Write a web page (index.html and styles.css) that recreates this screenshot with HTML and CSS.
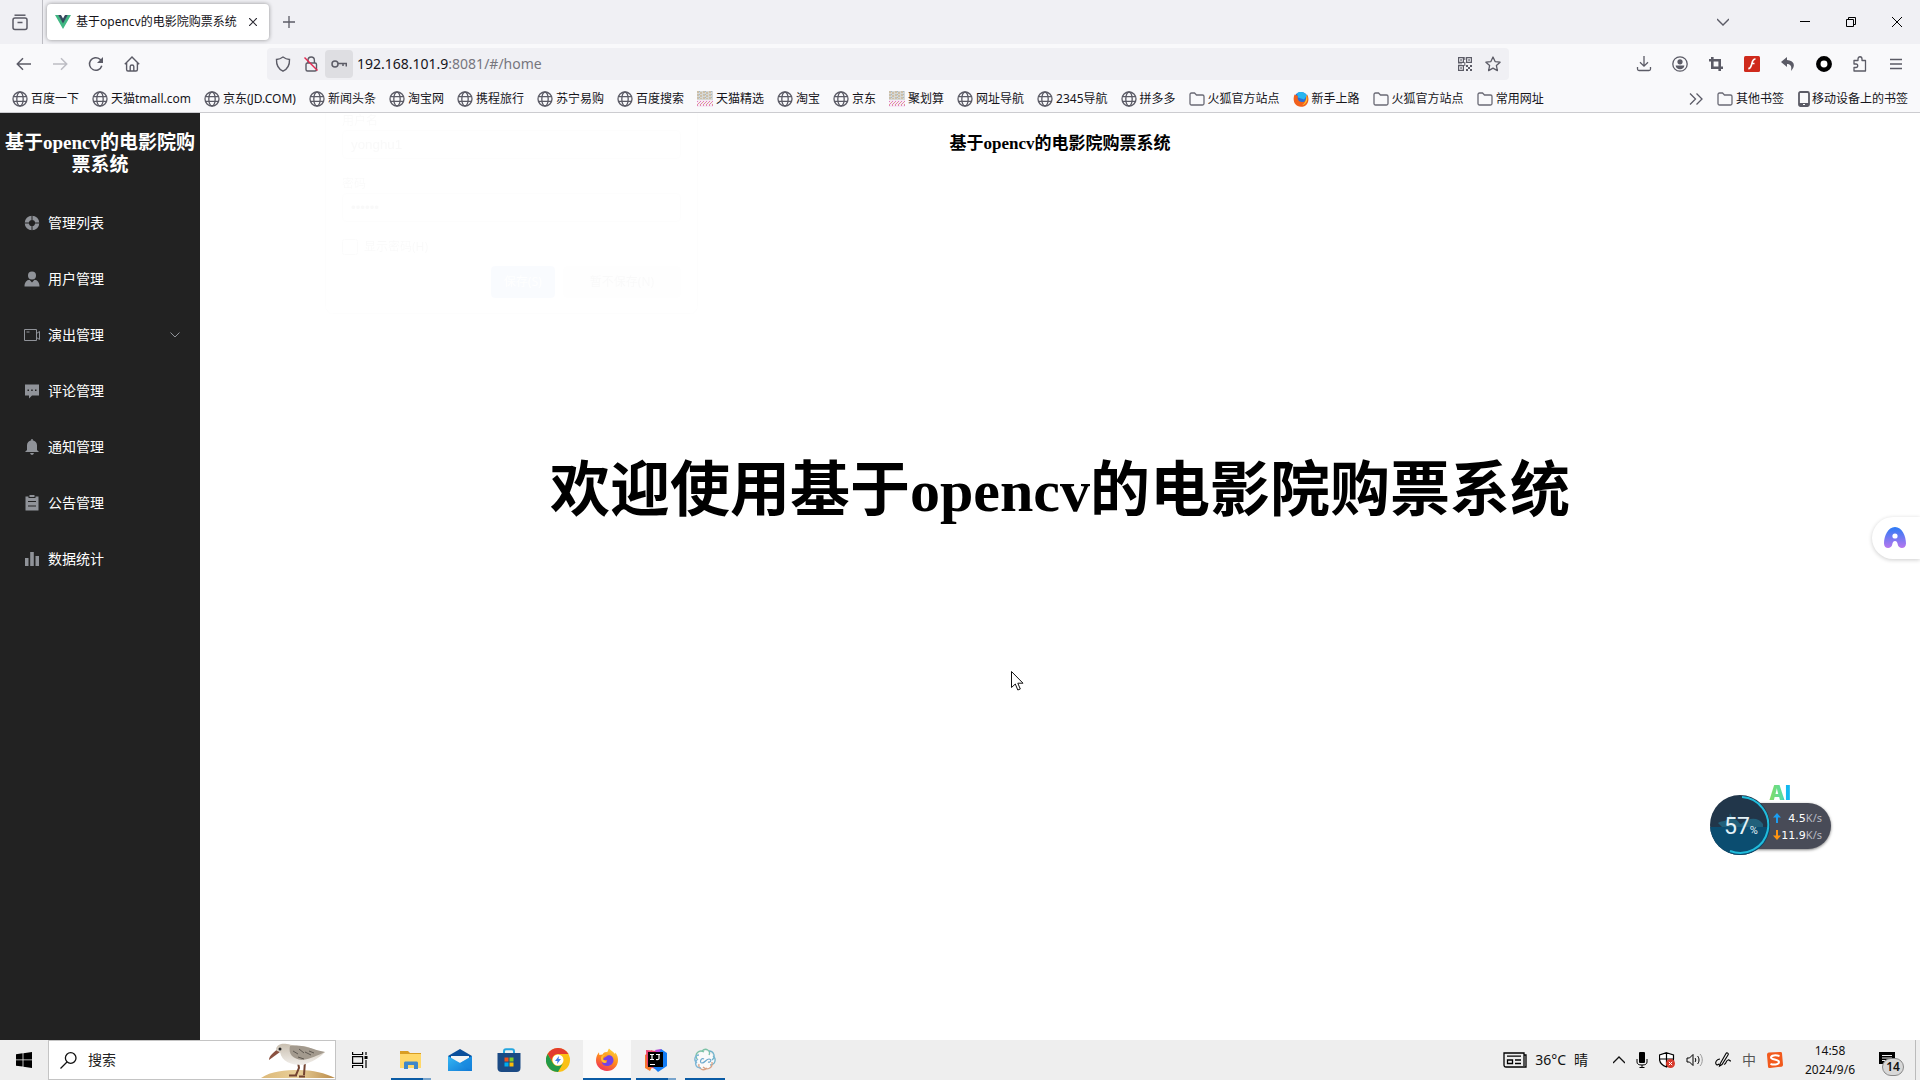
FILE: index.html
```html
<!DOCTYPE html>
<html lang="zh-CN">
<head>
<meta charset="utf-8">
<title>基于opencv的电影院购票系统</title>
<link rel="stylesheet" href="styles.css">
</head>
<body>
<svg class="defs" width="0" height="0" aria-hidden="true">
  <defs>
    <linearGradient id="flame" x1="0.8" y1="0" x2="0.3" y2="1"><stop offset="0" stop-color="#ffd83a"/><stop offset="0.5" stop-color="#ff8a1c"/><stop offset="1" stop-color="#f0305a"/></linearGradient>
    <linearGradient id="assist" x1="0" y1="0" x2="0" y2="1"><stop offset="0" stop-color="#2a7bf6"/><stop offset="1" stop-color="#b877ee"/></linearGradient>
    <linearGradient id="mailflap" x1="0" y1="0" x2="1" y2="1"><stop offset="0" stop-color="#35b8f5"/><stop offset="1" stop-color="#0f77d4"/></linearGradient>
    <linearGradient id="sand" x1="0" y1="0" x2="1" y2="0"><stop offset="0" stop-color="#dcb878"/><stop offset="0.5" stop-color="#e9d09a"/><stop offset="1" stop-color="#b98a48"/></linearGradient>
    <linearGradient id="belly" x1="0" y1="0" x2="0" y2="1"><stop offset="0" stop-color="#c9bfb0"/><stop offset="1" stop-color="#f1eeea"/></linearGradient>
    <symbol id="globe" viewBox="0 0 16 16"><g fill="none" stroke="#5b5b66" stroke-width="1.3"><circle cx="8" cy="8" r="7"/><ellipse cx="8" cy="8" rx="3.2" ry="7"/><path d="M1.5 5.6h13M1.5 10.4h13"/></g></symbol>
    <symbol id="folder" viewBox="0 0 16 16"><path d="M1 12.5v-9C1 2.6 1.600 2 2.500 2h3l2 2h6c.9 0 1.500.600 1.500 1.500v7c0 .9-.6 1.500-1.500 1.500h-11C1.600 14 1 13.400 1 12.500z" fill="none" stroke="#6a6a75" stroke-width="1.3"/></symbol>
    <symbol id="shop" viewBox="0 0 16 16"><path fill="#d6d8d6" d="M0 0h16v16H0z"/><path d="M1 0v8M4 1v7M7 0v8M10 1v7M13 0v8" stroke="#c3a67a" stroke-dasharray="2 1"/><path d="M2.500 0v8M8.500 0v8M14.500 0v8" stroke="#a3b8c9" stroke-dasharray="1 2"/><path fill="#f7e9f3" d="M0 9h16v7H0z"/><path d="M0 10.500h16M1 12.500h15M0 14.500h16" stroke="#e07cc2" stroke-dasharray="1 2"/><path d="M2 11.500h14M0 13.500h16" stroke="#dda58a" stroke-dasharray="1 2"/></symbol>
    <symbol id="firefox" viewBox="0 0 24 24"><path fill="url(#flame)" d="M12 23C5.800 23 1 18.300 1 12.300 1 8.800 2.300 6.300 4 4.200L4.300 7 7.600 6.500C8.700 4.500 10.500 3.800 12 4.200 13 3.200 13 1.800 14 .5c2 2.300 4.500 3.500 6 5.500l.4-1.500c2 2.600 2.700 5 2.600 7.500C23 18.200 18.200 23 12 23z"/><path fill="#7542e5" d="M12.500 7.500c3.500-1 6 1.500 6 4.700 0 3.400-2.900 5.800-6.300 5.800-3 0-5-1.500-5.400-4 2 1.300 3.700.6 4.700-.2 1.300-1 .8-1.600-.2-1.800-1.200-.2-2.600.4-3.300-.4 1-2.500 3-2.600 4.500-4.100z"/><path fill="#ffbd30" d="M8 11.600c-.5-1.800.6-3.700 2.600-4.600-1.300-.6-3 0-4.200 1.600-1 2-.4 4.700 1.600 6 1.700.6 3 .2 4-.6z"/></symbol>
    <symbol id="firefox-nightly" viewBox="0 0 16 16"><circle cx="8" cy="8" r="7" fill="#2b6fd8"/><path fill="#27b6f0" d="M4 2.500c3-2.500 8-1.500 10 2l-3 4-6-2z"/><path fill="#f2611c" d="M1.500 3.500L5 5c-1 2 0 5.500 3.500 6C12 11.500 13 9 13 6.500c.6-1 1-2 1-3 3 4 1.500 12.300-6 12.300C1.500 15.800-.8 9 1.500 3.500z"/><path fill="#ffc52e" d="M13.500 4c2 4 .5 9-4.500 10.300 4-3 4.500-6.300 4.500-10.300z"/></symbol>
  </defs>
</svg>

<header class="browser">
  <div class="tabbar">
    <button class="icon-btn recent" aria-label="最近浏览"><svg width="16" height="18" viewBox="0 0 16 18" fill="none" stroke="#5b5b66" stroke-width="1.500"><path d="M2.500 2.200h11" /><rect x="1" y="5" width="14" height="11.500" rx="2"/><path d="M5.500 9.500h5"/></svg></button>
    <div class="tab">
      <svg width="16" height="14" viewBox="0 0 16 14"><path fill="#41b883" d="M0 0h3.500L8 7.500 12.500 0H16L8 14z"/><path fill="#34495e" d="M3.200 0H6l2 3.500L10 0h2.800L8 8.400z"/></svg>
      <span class="tab-title">基于opencv的电影院购票系统</span>
      <button class="icon-btn tab-close" aria-label="关闭标签页"><svg width="8" height="8" viewBox="0 0 8 8" stroke="#2b2a33" stroke-width="1.200"><path d="M0 0l8 8M8 0L0 8"/></svg></button>
    </div>
    <button class="icon-btn new-tab" aria-label="新建标签页"><svg width="12" height="12" viewBox="0 0 12 12" stroke="#5b5b66" stroke-width="1.300"><path d="M6 0v12M0 6h12"/></svg></button>
    <div class="window-controls">
      <button class="icon-btn tabs-list" aria-label="标签页列表"><svg width="12" height="8" viewBox="0 0 12 8" fill="none" stroke="#5b5b66" stroke-width="1.400"><path d="M0 1l6 6 6-6"/></svg></button>
      <button class="icon-btn" aria-label="最小化"><svg width="10" height="10" viewBox="0 0 10 10" stroke="#000"><path d="M0 4.500h10"/></svg></button>
      <button class="icon-btn" aria-label="还原"><svg width="10" height="10" viewBox="0 0 10 10" fill="none" stroke="#000"><path d="M.5 2.500h7v7h-7zM2.500 2.500v-2h7v7h-2"/></svg></button>
      <button class="icon-btn" aria-label="关闭"><svg width="10" height="10" viewBox="0 0 10 10" stroke="#000"><path d="M0 0l10 10M10 0L0 10"/></svg></button>
    </div>
  </div>

  <div class="navbar">
    <div class="nav-buttons">
      <button class="icon-btn" aria-label="后退"><svg width="16" height="16" viewBox="0 0 16 16" fill="none" stroke="#5b5b66" stroke-width="1.500"><path d="M15 8H1.500M7 2.200L1.300 8 7 13.800"/></svg></button>
      <button class="icon-btn" aria-label="前进"><svg width="16" height="16" viewBox="0 0 16 16" fill="none" stroke="#bdbdc4" stroke-width="1.500"><path d="M1 8h13.500M9 2.200L14.700 8 9 13.800"/></svg></button>
      <button class="icon-btn" aria-label="刷新"><svg width="16" height="16" viewBox="0 0 16 16" fill="none" stroke="#5b5b66" stroke-width="1.500"><path d="M13.800 9.800A6.300 6.300 0 1 1 12 3.300L14 5.500"/><path fill="#5b5b66" stroke="none" d="M15 1v6H9z"/></svg></button>
      <button class="icon-btn" aria-label="主页"><svg width="16" height="16" viewBox="0 0 16 16" fill="none" stroke="#5b5b66" stroke-width="1.400"><path d="M.8 8.200L8 1l7.200 7.200M2.600 7v6.500c0 .8.500 1.500 1.400 1.500h8c.9 0 1.400-.7 1.400-1.500V7M6.200 15v-4.500c0-1 .8-1.500 1.800-1.500s1.800.5 1.800 1.500V15"/></svg></button>
    </div>
    <div class="urlbar">
      <button class="icon-btn url-icon" aria-label="跟踪保护"><svg width="16" height="16" viewBox="0 0 16 16" fill="none" stroke="#5b5b66" stroke-width="1.400"><path d="M8 1c2 1.500 4 2.300 6.500 2.500.2 5-1.500 9.300-6.500 11.700C3 12.800 1.300 8.500 1.500 3.500 4 3.300 6 2.500 8 1z"/></svg></button>
      <button class="icon-btn url-icon" aria-label="连接不安全"><svg width="16" height="16" viewBox="0 0 16 16" fill="none"><g stroke="#5b5b66" stroke-width="1.400"><rect x="3" y="7" width="10.500" height="8" rx="1.500"/><path d="M5 7V4.500C5 2.500 6.300 1 8.200 1s3.200 1.500 3.200 3.500V7"/></g><path d="M1.500 1.500l13 13" stroke="#e22850" stroke-width="1.400"/></svg></button>
      <button class="icon-btn url-icon key" aria-label="已保存的密码"><svg width="16" height="16" viewBox="0 0 16 16" fill="none" stroke="#5b5b66" stroke-width="1.500"><circle cx="4" cy="8" r="3"/><path d="M7 7.500h8.300v3M12 7.500v2.500"/></svg></button>
      <a class="url" href="#/home">192.168.101.9<span>:8081/#/home</span></a>
      <button class="icon-btn url-icon" aria-label="二维码"><svg width="16" height="16" viewBox="0 0 16 16"><g fill="none" stroke="#5b5b66" stroke-width="1.200"><path d="M1.600 1.600h4.800v4.800H1.600zM9.600 1.600h4.800v4.800H9.600zM1.600 9.600h4.800v4.800H1.600z"/></g><path fill="#5b5b66" d="M3.300 3.300h1.500v1.500H3.300zM11.300 3.300h1.500v1.500h-1.500zM3.300 11.300h1.500v1.500H3.300zM9 9h2v2H9zM13 9h2v2h-2zM11 11h2v2h-2zM9 13h2v2H9zM13 13h2v2h-2zM7.300 1h1v3h-1zM7.300 6h1v4h-1zM1 7.400h4v.9H1z"/></svg></button>
      <button class="icon-btn url-icon" aria-label="添加书签"><svg width="16" height="16" viewBox="0 0 16 16" fill="none" stroke="#5b5b66" stroke-width="1.300" stroke-linejoin="round"><path d="M8 1l2.100 4.600 5 .6-3.700 3.400 1 5L8 12.100l-4.400 2.500 1-5L.9 6.200l5-.6z"/></svg></button>
    </div>
    <div class="tools">
      <button class="icon-btn" aria-label="下载"><svg width="16" height="16" viewBox="0 0 16 16" fill="none" stroke="#5b5b66" stroke-width="1.300"><path d="M8 0v10M4 6.200l4 4 4-4M1.500 11v2c0 .9.600 1.500 1.500 1.500h10c.9 0 1.500-.6 1.500-1.500v-2"/></svg></button>
      <button class="icon-btn" aria-label="账户"><svg width="16" height="16" viewBox="0 0 16 16"><circle cx="8" cy="8" r="7.200" fill="none" stroke="#5b5b66" stroke-width="1.300"/><circle cx="8" cy="5.800" r="2.600" fill="#5b5b66"/><path d="M3.600 9.500h8.800C12 12 10.300 13.200 8 13.200S4 12 3.600 9.500z" fill="#5b5b66"/></svg></button>
      <button class="icon-btn" aria-label="截图"><svg width="16" height="16" viewBox="0 0 16 16" fill="none" stroke="#5b5b66" stroke-width="2.600"><path d="M1 4.300h10.700V15M4.300 1v10.700H15"/></svg></button>
      <button class="icon-btn" aria-label="Flash"><svg width="16" height="16" viewBox="0 0 16 16"><rect width="16" height="16" rx="1.500" fill="#cf2a1c"/><path d="M11.500 3C8 3 8.300 7 7.300 9.500 6.700 11.300 6 12.500 4.300 12.700M7.500 7.500h3" fill="none" stroke="#fff" stroke-width="1.700"/></svg></button>
      <button class="icon-btn" aria-label="撤销"><svg width="16" height="16" viewBox="0 0 16 16"><path fill="#5b5b66" d="M7 1L1 6l6 5V8c3.500 0 5 2 4 7 5-5 3.500-10.500-4-11z"/></svg></button>
      <button class="icon-btn" aria-label="扩展程序"><svg width="16" height="16" viewBox="0 0 16 16"><circle cx="8" cy="8" r="5.700" fill="#fff" stroke="#000" stroke-width="4.500"/></svg></button>
      <button class="icon-btn" aria-label="扩展"><svg width="16" height="16" viewBox="0 0 16 16" fill="none" stroke="#5b5b66" stroke-width="1.300" stroke-linejoin="round"><path d="M6 4.500V3c0-3 4-3 4 0v1.500h3.500V15H2v-3.500h2c2.300 0 2.300-3.500 0-3.500H2V4.500z"/></svg></button>
      <button class="icon-btn" aria-label="菜单"><svg width="14" height="12" viewBox="0 0 14 12" stroke="#5b5b66" stroke-width="1.300"><path d="M1 1.500h12M1 6h12M1 10.500h12"/></svg></button>
    </div>
  </div>

  <nav class="bookmarks" aria-label="书签">
    <a href="#"><svg class="ico"><use href="#globe"/></svg>百度一下</a>
    <a href="#"><svg class="ico"><use href="#globe"/></svg>天猫tmall.com</a>
    <a href="#"><svg class="ico"><use href="#globe"/></svg>京东(JD.COM)</a>
    <a href="#"><svg class="ico"><use href="#globe"/></svg>新闻头条</a>
    <a href="#"><svg class="ico"><use href="#globe"/></svg>淘宝网</a>
    <a href="#"><svg class="ico"><use href="#globe"/></svg>携程旅行</a>
    <a href="#"><svg class="ico"><use href="#globe"/></svg>苏宁易购</a>
    <a href="#"><svg class="ico"><use href="#globe"/></svg>百度搜索</a>
    <a href="#"><svg class="ico"><use href="#shop"/></svg>天猫精选</a>
    <a href="#"><svg class="ico"><use href="#globe"/></svg>淘宝</a>
    <a href="#"><svg class="ico"><use href="#globe"/></svg>京东</a>
    <a href="#"><svg class="ico"><use href="#shop"/></svg>聚划算</a>
    <a href="#"><svg class="ico"><use href="#globe"/></svg>网址导航</a>
    <a href="#"><svg class="ico"><use href="#globe"/></svg>2345导航</a>
    <a href="#"><svg class="ico"><use href="#globe"/></svg>拼多多</a>
    <a href="#"><svg class="ico"><use href="#folder"/></svg>火狐官方站点</a>
    <a href="#"><svg class="ico"><use href="#firefox-nightly"/></svg>新手上路</a>
    <a href="#"><svg class="ico"><use href="#folder"/></svg>火狐官方站点</a>
    <a href="#"><svg class="ico"><use href="#folder"/></svg>常用网址</a>
    <div class="bookmarks-end">
      <button class="icon-btn" aria-label="更多书签"><svg width="14" height="12" viewBox="0 0 14 12" fill="none" stroke="#5b5b66" stroke-width="1.300"><path d="M1 .5L6.500 6 1 11.500M7.500.5L13 6l-5.500 5.500"/></svg></button>
      <a href="#"><svg class="ico"><use href="#folder"/></svg>其他书签</a>
      <a class="mobile" href="#"><svg width="12" height="16" viewBox="0 0 12 16"><rect x="1" y="1" width="10" height="14" rx="1.500" fill="none" stroke="#5b5b66" stroke-width="1.800"/><path d="M1 12h10v3H1z" fill="#5b5b66"/><path d="M5 13.500h2" stroke="#fff"/></svg>移动设备上的书签</a>
    </div>
  </nav>
</header>

<div class="page">
  <aside class="sidebar">
    <h3>基于opencv的电影院购票系统</h3>
    <ul class="menu">
      <li><a href="#"><svg width="24" height="16" viewBox="0 0 24 16"><circle cx="12" cy="8" r="5.200" fill="none" stroke="#909399" stroke-width="4.200"/><path d="M12 0v5M12 11v5M4 8h5M15 8h5" stroke="#222"/></svg>管理列表</a></li>
      <li><a href="#"><svg width="24" height="16" viewBox="0 0 24 16" fill="#909399"><circle cx="12" cy="4.500" r="4"/><path d="M4.500 15.500c0-4 2-6.500 5-6.700l2.500 2.700 2.500-2.700c3 .2 5 2.700 5 6.700z"/></svg>用户管理</a></li>
      <li><a href="#"><svg width="24" height="16" viewBox="0 0 24 16" fill="none" stroke="#909399"><path d="M4.500 2.500h12v11h-12zM16.500 6.500l3-2v8l-3-2M6.500 5h3"/></svg>演出管理<svg class="arrow" width="10" height="8" viewBox="0 0 10 8" fill="none" stroke="#909399"><path d="M.5 1.500L5 6l4.500-4.500"/></svg></a></li>
      <li><a href="#"><svg width="24" height="16" viewBox="0 0 24 16"><path fill="#909399" d="M5 1.500h14v11h-7L9 15.500v-3H5z"/><path fill="#222" d="M7.500 6.500H9V8H7.500zM11.200 6.500h1.500V8h-1.500zM15 6.500h1.500V8H15z"/></svg>评论管理</a></li>
      <li><a href="#"><svg width="24" height="16" viewBox="0 0 24 16" fill="#909399"><path d="M11.300 0h1.400v1.200c2.600.5 4.300 2.400 4.300 5V11l2 2H5l2-2V6.200c0-2.600 1.700-4.500 4.300-5zM10 14h4l-1 1.700h-2z"/></svg>通知管理</a></li>
      <li><a href="#"><svg width="24" height="16" viewBox="0 0 24 16"><path fill="#909399" d="M5.500 1.500h3V3h7V1.500h3v14h-13zM9.500 0h5v2h-5z"/><path d="M8 6.500h8M8 11h8" stroke="#222" stroke-width="1.200"/></svg>公告管理</a></li>
      <li><a href="#"><svg width="24" height="16" viewBox="0 0 24 16" fill="#909399"><path d="M5 7h3.500v8H5zM10.200 1h3.600v14h-3.600zM15.500 5H19v10h-3.500z"/></svg>数据统计</a></li>
    </ul>
  </aside>
  <main class="content">
    <h4>基于opencv的电影院购票系统</h4>
    <div class="welcome"><h1>欢迎使用基于opencv的电影院购票系统</h1></div>
  </main>

  <div class="fading-prompt" aria-hidden="true">
    <label for="user">用户名</label>
    <input id="user" type="text" value="yonghu1" tabindex="-1">
    <label for="pass">密码</label>
    <input id="pass" type="password" value="123456" tabindex="-1">
    <div class="show"><input id="show" type="checkbox" tabindex="-1"><label for="show">显示密码(H)</label></div>
    <div class="prompt-actions"><button class="primary" tabindex="-1">保存(S)</button><button tabindex="-1">暂不保存(N)</button></div>
  </div>

  <button class="assistant" aria-label="助手"><svg width="22" height="22" viewBox="0 0 22 22"><path fill="url(#assist)" d="M11 0c7 0 11 9 11 16.500 0 6-7.500 6-8.300.8-.3-2-1-3.300-2.700-3.300s-2.400 1.300-2.700 3.300C7.500 22.500 0 22.500 0 16.500 0 9 4 0 11 0z"/><circle cx="11" cy="9" r="2.600" fill="#fff"/></svg></button>

  <div class="monitor">
    <span class="ai">AI</span>
    <div class="speeds">
      <div><svg width="8" height="10" viewBox="0 0 8 10"><path d="M4 0l4 4.500H5V10H3V4.500H0z" fill="#1c9df0"/></svg><span>4.5<i>K/s</i></span></div>
      <div><svg width="8" height="10" viewBox="0 0 8 10"><path d="M4 10l4-4.500H5V0H3v5.500H0z" fill="#ff9412"/></svg><span>11.9<i>K/s</i></span></div>
    </div>
    <div class="gauge">
      <svg width="60" height="60" viewBox="0 0 60 60"><path fill="#21364a" d="M0 0h60v60H0z"/><path d="M0 32h60v28H0z" fill="#0b4d70"/><path d="M8 28c5-3 8-1 11-5l1-5 3 6c5 0 6 5 8 5 6-6 17-8 22 0v3H12z" fill="#21607a"/><path d="M32 2a28 28 0 1 1-12 54" fill="none" stroke="#20bcdc" stroke-width="2"/></svg>
      <span class="gauge-value">57<small>%</small></span>
    </div>
  </div>

  <svg class="cursor" width="13" height="20" viewBox="0 0 13 20"><path d="M.5.500v16L4.300 13l2.500 6 2.500-1-2.500-5.800H12z" fill="#fff" stroke="#111"/></svg>
</div>

<footer class="taskbar">
  <button class="task start" aria-label="开始"><svg width="16" height="16" viewBox="0 0 16 16"><path d="M0 2.300L6.600 1.300v6.200H0zM7.400 1.200L16 0v7.500H7.400zM0 8.300h6.600v6.300L0 13.700zM7.400 8.300H16V16l-8.600-1.200z"/></svg></button>
  <div class="search">
    <svg width="17" height="17" viewBox="0 0 17 17" fill="none" stroke="#111" stroke-width="1.300"><circle cx="10.700" cy="6" r="5.300"/><path d="M7 10L.5 16.500"/></svg>
    <input type="text" value="搜索" aria-label="搜索">
    <svg width="74" height="36" viewBox="0 0 74 36"><path d="M0 36c10-7 24-8 38-8s26 3 36 8z" fill="url(#sand)"/><path d="M37 20l1 6-3 7M44 19l-1 14M28 33.500h8M38 34.500h6" stroke="#744431" stroke-width="2" fill="none"/><path d="M17 7C10 12 8 15 8 18l11-8z" fill="#8a5140"/><path d="M15 7c1-5 6-6 11-5 5 1 8 2 14 2 9 0 12 5 24 6-6 6-13 10-22 13-12 0-21-3-23-13-2-1-4-1-4-3z" fill="url(#belly)"/><path d="M29 4c14-2 20 3 35 6-7 3-14 7-23 8C32 17 27 12 29 4z" fill="#a39a8e"/><path d="M32 9l5 3M38 7l5 4M44 10l6 3M37 15l6 2M48 9l5 2" stroke="#5e5851"/><circle cx="19" cy="7" r="1.500" fill="#222"/></svg>
  </div>
  <button class="task" aria-label="任务视图"><svg width="16" height="16" viewBox="0 0 16 16" fill="none" stroke="#000" stroke-width="1.200"><path d="M.6 0v2.500h10V0M.6 16v-2.500h10V16M.6 4.600h10v6.800H.6zM14 0v3M14 8v8"/><path fill="#000" stroke="none" d="M12.500 4h3v3h-3z"/></svg></button>
  <div class="apps">
    <button class="task running multi" aria-label="文件资源管理器"><svg width="24" height="24" viewBox="0 0 24 24"><path fill="#d99e22" d="M1 3h8l2 2h11v4H1z"/><path fill="#ffd869" d="M1 6h21v14H1z"/><path fill="#3f87c9" d="M5 21v-6c0-1 .6-1.600 1.600-1.600h10.800c1 0 1.600.6 1.600 1.600v6h-4v-4H9v4z"/></svg></button>
    <button class="task" aria-label="邮件"><svg width="24" height="24" viewBox="0 0 24 24"><path fill="#0b4f9b" d="M0 8l12-7 12 7v3H0z"/><path fill="#f4f4f4" d="M3 8h18v6H3z"/><path fill="url(#mailflap)" d="M0 8l12 7 12-7v15H0z"/><path fill="#1789df" opacity=".6" d="M9.500 13.500L24 23V8l-12 7z"/></svg></button>
    <button class="task" aria-label="应用商店"><svg width="24" height="24" viewBox="0 0 24 24"><path d="M7 7V3.500C7 2 8 1.200 9 1.200h6c1 0 2 .8 2 2.300V7" fill="none" stroke="#25a6df" stroke-width="2"/><path fill="#1b4a84" d="M.5 5h23v15c0 2.500-1.500 4-4 4h-15c-2.500 0-4-1.500-4-4z"/><path fill="#f1511b" d="M7.500 9.500h4v4h-4z"/><path fill="#80cc28" d="M12.500 9.500h4v4h-4z"/><path fill="#00adef" d="M7.500 14.500h4v4h-4z"/><path fill="#fbbc09" d="M12.500 14.500h4v4h-4z"/></svg></button>
    <button class="task" aria-label="Chrome"><svg width="24" height="24" viewBox="0 0 24 24"><circle cx="12" cy="12" r="12" fill="#fbc116"/><path fill="#e33b2e" d="M1.600 6A12 12 0 0 1 22.400 6H12a6 6 0 0 0-5.200 9z"/><path fill="#229a48" d="M1.600 6A12 12 0 0 0 12 24l5.200-9A6 6 0 0 1 6.800 15z"/><circle cx="12" cy="12" r="5.500" fill="#fff"/><path fill="#3c7de8" d="M13 8l-4 5h2.500L11 16l4-5h-2.500z"/></svg></button>
    <button class="task running active" aria-label="Firefox"><svg width="24" height="24"><use href="#firefox"/></svg></button>
    <button class="task running multi" aria-label="IntelliJ IDEA"><svg width="24" height="24" viewBox="0 0 24 24"><path fill="#f77a2b" d="M1 7l7-5 4 10-6 11-5-3z"/><path fill="#e9406f" d="M2 2l10 1 6 8-4 11-11-4z"/><path fill="#b345d8" d="M11 2l6-1 4 5-5 6z"/><path fill="#147df5" d="M17 1l6 4v13l-9 6-5-5z"/><path d="M4 4h15v15H4z"/><path d="M6 6.500h4M8 6.500v5M6 11.500h4M12 6.500h4M15 6.500v4c0 1-1.500 1.300-3 1M6 16.500h5" stroke="#fff" stroke-width="1.200" fill="none"/></svg></button>
    <button class="task running" aria-label="OpenCV"><svg width="24" height="24" viewBox="0 0 24 24" fill="none" stroke-width="1.300"><circle cx="12" cy="12" r="9" fill="#fafafa" stroke="none"/><path d="M4 11C1 6 6 1 11 4M9 3c4-4 9 0 7 4" stroke="#7cc2a6"/><path d="M16 3c5 0 7 6 3 9M20 8c4 3 2 9-3 9" stroke="#72b4cc"/><path d="M19 14c1 6-5 9-9 5M14 20c-4 4-9 0-8-4" stroke="#d8a083"/><path d="M8 20c-6 0-7-6-3-9M4 15C0 12 2 7 6 7" stroke="#7cb6d6"/><path d="M11 11c-3-2-5 4-2 4 3 0 4-4 7-4 3 0 2 4-1 3" stroke="#6ba7cd" stroke-width="1.200"/></svg></button>
  </div>
  <div class="tray">
    <button class="weather"><svg width="24" height="16" viewBox="0 0 24 16" fill="none" stroke="#000" stroke-width="1.300"><path d="M21 3h2v12H3c-1.300 0-2-.7-2-2V1h20v13M4 4.200h14M12 8h6M12 11.500h6M4.500 8h5v3.500h-5z"/></svg><span>36°C</span><span>晴</span></button>
    <div class="tray-icons">
      <button class="icon-btn" aria-label="显示隐藏的图标"><svg width="12" height="8" viewBox="0 0 12 8" fill="none" stroke="#111" stroke-width="1.300"><path d="M0 7l6-6 6 6"/></svg></button>
      <button class="icon-btn" aria-label="麦克风"><svg width="12" height="16" viewBox="0 0 12 16"><rect x="3" width="6" height="11" rx="1"/><path d="M1 7v3c0 2 1.500 3 5 3s5-1 5-3V7M6 13v3M3.500 15.500h5" fill="none" stroke="#000"/></svg></button>
      <button class="icon-btn" aria-label="安全中心"><svg width="16" height="16" viewBox="0 0 16 16"><path d="M7.500.700L14.500 3v4c0 3.500-3 6.500-7 8-4-1.500-7-4.500-7-8V3zM7.500.700V15M.5 7h14" fill="#fff" stroke="#000" stroke-width="1.200"/><circle cx="11.500" cy="11.500" r="4.500" fill="#d8392c"/><path d="M9.800 9.800l3.400 3.400M13.200 9.800l-3.400 3.400" stroke="#fff"/></svg></button>
      <button class="icon-btn" aria-label="音量"><svg width="18" height="14" viewBox="0 0 18 14" fill="none" stroke="#000"><path d="M1 5h2.500L7 1.500v11L3.500 9H1zM9 5c1 1 1 3 0 4M11.500 3c2 2 2 6 0 8"/><path d="M14 1c3 3 3 9 0 12" stroke="#999"/></svg></button>
      <button class="icon-btn" aria-label="手写笔"><svg width="16" height="16" viewBox="0 0 16 16" fill="none" stroke="#000" stroke-width="1.100"><path d="M5 12L11 1.500c1-1.500 3 0 2 1.500L7 12.500 4.500 14zM5 7c-3 0-5 3-4 5 1 2 3 0 3 0M9 12c2 1 2-4 4-4 2-.5 1 1 3 1"/></svg></button>
      <button class="icon-btn ime">中</button>
      <button class="icon-btn" aria-label="搜狗输入法"><svg width="16" height="16" viewBox="0 0 16 16"><path fill="#f25a1d" d="M2 .5L13.500 0c1 0 1.500.5 1.500 1.500l1 11c0 1.500-.6 2-1.500 2.200L3 16c-1.300 0-2-.4-2-1.500L0 3C0 1.500.6.600 2 .500z"/><path d="M12.500 4C9 3 4 3 4 5.500S12 7 12 10s-6 3-8.500 1.800" fill="none" stroke="#fff" stroke-width="2"/></svg></button>
    </div>
    <button class="clock"><span>14:58</span><span>2024/9/6</span></button>
    <button class="notices" aria-label="通知"><svg width="16" height="16" viewBox="0 0 16 16"><path d="M0 0h16v12H8l-4 4v-4H0z"/><path d="M3 3.500h10M3 6h10M3 8.500h6" stroke="#eee"/></svg><span class="count">14</span></button>
  </div>
</footer>
</body>
</html>
```
FILE: styles.css
```css
* { box-sizing: border-box; }

body {
  margin: 0;
  min-height: 100vh;
  display: flex;
  flex-direction: column;
  background: #fff;
  color: #15141a;
  font: 12px/16px "Noto Sans", "Noto Sans CJK SC", sans-serif;
}

.defs { position: absolute; }
svg { flex: none; display: block; }
a { color: inherit; text-decoration: none; }
button { font: inherit; color: inherit; border: 0; padding: 0; background: none; }

.icon-btn {
  display: flex;
  align-items: center;
  justify-content: center;
}

/* Browser chrome */
.browser {
  background: #f9f9fb;
  border-bottom: 1px solid #ccccd0;
}

.tabbar {
  display: flex;
  align-items: center;
  height: 44px;
  background: #f0f0f4;
}
.recent { width: 43px; height: 44px; padding-right: 2px; border-right: 1px solid #bdbdc3; }
.tab {
  display: flex;
  align-items: center;
  gap: 5px;
  width: 222px;
  height: 36px;
  margin-left: 4px;
  padding: 0 8px;
  border-radius: 4px;
  background: #fff;
  box-shadow: 0 0 4px rgba(0, 0, 0, 0.4);
}
.tab-title { flex: 1; white-space: nowrap; }
.tab-close { width: 16px; height: 16px; }
.new-tab { width: 40px; height: 36px; }
.window-controls { display: flex; margin-left: auto; }
.window-controls .icon-btn { width: 46px; height: 44px; }
.window-controls .tabs-list { margin-right: 36px; }

.navbar {
  display: flex;
  align-items: center;
  height: 40px;
  padding: 0 6px;
}
.nav-buttons, .tools { display: flex; }
.nav-buttons .icon-btn, .tools .icon-btn { width: 36px; height: 32px; }
.urlbar {
  display: flex;
  align-items: center;
  flex: 1;
  height: 32px;
  margin: 0 117px;
  padding: 0 2px;
  border-radius: 4px;
  background: #f0f0f4;
}
.url-icon { width: 28px; height: 28px; }
.key { border-radius: 4px; background: #dedee2; }
.url { flex: 1; margin-left: 4px; font-size: 14px; line-height: 20px; }
.url span { color: #77767e; }

.bookmarks {
  display: flex;
  align-items: center;
  gap: 13px;
  height: 28px;
  padding: 2px 12px 0 12px;
  white-space: nowrap;
}
.bookmarks a { display: flex; align-items: center; gap: 3px; }
.bookmarks-end { display: flex; gap: 14px; margin-left: auto; }
.bookmarks .mobile { gap: 2px; }
.ico { width: 16px; height: 16px; }

/* Application */
.page {
  position: relative;
  display: flex;
  flex: 1;
  overflow: hidden;
}
.sidebar { width: 200px; background: #222; color: #fff; }
.sidebar h3 {
  margin: 19px 0;
  text-align: center;
  font: bold 19px/22px "Liberation Serif", "Noto Sans CJK SC", serif;
}
.menu { margin: 0; padding: 0; list-style: none; }
.menu a {
  display: flex;
  align-items: center;
  gap: 4px;
  height: 56px;
  padding: 0 20px;
  font-size: 14px;
}
.menu .arrow { margin-left: auto; }

.content {
  display: flex;
  flex: 1;
  flex-direction: column;
  color: #000;
  text-align: center;
}
.content h4 {
  margin: 21px 0;
  font: bold 17px/20px "Liberation Serif", "Noto Sans CJK SC", serif;
}
.welcome { padding-top: 276px; }
.welcome h1 {
  margin: 0;
  font: bold 60px/80px "Liberation Serif", "Noto Sans CJK SC", serif;
}

/* Password prompt at the end of its fade-out */
.fading-prompt {
  position: absolute;
  top: 0;
  left: 325px;
  display: flex;
  flex-direction: column;
  width: 373px;
  padding: 0 16px 15px;
  border: 1px solid #bbb;
  border-top: 0;
  border-radius: 0 0 8px 8px;
  opacity: 0.02;
  pointer-events: none;
}
.fading-prompt > input {
  height: 29px;
  margin: 1px 0 17px;
  padding: 0 8px;
  border: 1px solid #bbb;
  border-radius: 4px;
}
.show { display: flex; align-items: center; gap: 6px; }
.show input { width: 16px; height: 16px; margin: 0; }
.prompt-actions { display: flex; justify-content: flex-end; gap: 8px; margin-top: 11px; }
.prompt-actions button { width: 118px; height: 32px; border-radius: 4px; background: #ddd; }
.prompt-actions .primary { width: 64px; background: #0061e0; color: #fff; }

.assistant {
  position: absolute;
  top: 404px;
  right: 0;
  width: 48px;
  height: 42px;
  padding-left: 12px;
  border-radius: 21px 0 0 21px;
  background: #fff;
  box-shadow: 0 1px 4px rgba(0, 0, 0, 0.2);
}

.monitor {
  position: absolute;
  top: 682px;
  right: 89px;
  width: 121px;
  height: 60px;
}
.ai {
  position: absolute;
  top: -12px;
  left: 59px;
  font: 900 20px/20px Inter, sans-serif;
  background: linear-gradient(90deg, #86dc62, #58dca0 60%, #12b8f0 75%);
  background-clip: text;
  color: transparent;
}
.speeds {
  position: absolute;
  top: 8px;
  right: 0;
  width: 91px;
  padding: 6px 9px 6px 33px;
  border-radius: 0 23px 23px 0;
  background: #484b57;
  box-shadow: 0 1px 3px rgba(0, 0, 0, 0.5);
  color: #fff;
  font: 11px/17px "DejaVu Sans", sans-serif;
}
.speeds div { display: flex; align-items: center; justify-content: space-between; height: 17px; }
.speeds i { font: 11px/17px "Noto Sans", sans-serif; color: #b8bac2; }
.gauge {
  position: absolute;
  top: 0;
  left: 0;
  overflow: hidden;
  border-radius: 50%;
}
.gauge-value {
  position: absolute;
  top: 18px;
  left: 14px;
  color: #e4f2f7;
  font: 23px/28px Roboto, sans-serif;
}
.gauge-value small { font-size: 11px; }
.cursor { position: absolute; top: 558px; left: 1011px; }

/* Taskbar */
.taskbar {
  display: flex;
  height: 40px;
  background: #eee;
  color: #111;
}
.task {
  display: flex;
  align-items: center;
  justify-content: center;
  width: 48px;
  height: 40px;
}
.search {
  display: flex;
  align-items: center;
  width: 288px;
  padding-left: 11px;
  border: 1px solid #c4c4c4;
  background: #fff;
}
.search input {
  flex: 1;
  min-width: 0;
  padding: 0 0 0 11px;
  border: 0;
  outline: 0;
  background: none;
  color: #222;
  font: inherit;
  font-size: 14px;
}
.apps { display: flex; gap: 1px; margin-left: 3px; }
.running {
  background: linear-gradient(#0a5ba5, #0a5ba5) bottom / 40px 2px no-repeat;
}
.running.multi {
  background: linear-gradient(90deg, #0a5ba5 32px, #78a4cc 32px) bottom / 40px 2px no-repeat;
}
.running.active {
  background: linear-gradient(#0a5ba5, #0a5ba5) bottom / 48px 2px no-repeat #fafafa;
}
.tray {
  display: flex;
  align-items: center;
  margin-left: auto;
  margin-right: 4px;
  border-right: 1px solid #bbb;
}
.weather { display: flex; align-items: center; gap: 8px; margin-right: 25px; font-size: 14px; }
.tray-icons { display: flex; gap: 11px; margin-right: 6px; }
.tray-icons .icon-btn { height: 40px; }
.ime { font-size: 14px; color: #555; }
.clock { display: flex; flex-direction: column; gap: 3px; width: 82px; align-items: center; }
.notices { position: relative; width: 44px; padding: 0 8px; }
.count {
  position: absolute;
  top: 6px;
  left: 11px;
  width: 22px;
  height: 18px;
  border: 1px solid #888;
  border-radius: 9px;
  background: #d8d8d8;
  font-weight: 600;
}
```
